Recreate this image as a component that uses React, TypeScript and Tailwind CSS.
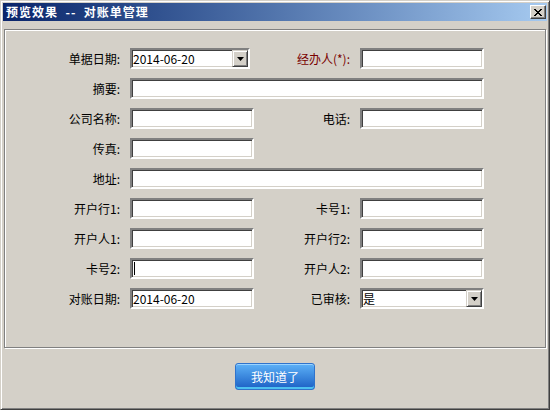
import type { ReactNode } from "react";

const sunken =
  "border-2 border-t-[#808080] border-l-[#808080] border-b-white border-r-white shadow-[inset_1px_1px_0_#404040,inset_-1px_-1px_0_#d4d0c8] bg-white";

function Label({ children, red }: { children: ReactNode; red?: boolean }) {
  return (
    <div
      className={`pr-[10px] text-right leading-[21px] ${
        red ? "text-[#7a0000]" : "text-black"
      }`}
    >
      {children}
    </div>
  );
}

function Field({
  wide,
  children,
}: {
  wide?: boolean;
  children?: ReactNode;
}) {
  return (
    <div
      className={`${sunken} flex h-[21px] items-center pl-[1px] leading-none ${
        wide ? "col-span-3 w-[354px]" : "w-[124px]"
      }`}
    >
      {children}
    </div>
  );
}

function DropButton() {
  return (
    <div className="flex h-[17px] w-[16px] items-center justify-center border border-t-[#d4d0c8] border-l-[#d4d0c8] border-b-[#404040] border-r-[#404040] bg-[#d4d0c8] shadow-[inset_1px_1px_0_#fff,inset_-1px_-1px_0_#808080]">
      <svg width="7" height="4" viewBox="0 0 7 4">
        <path d="M0 0h7L3.5 4z" fill="#000" />
      </svg>
    </div>
  );
}

function Combo({ value, w }: { value: string; w: string }) {
  return (
    <div className={`${sunken} flex h-[21px] items-center justify-between pl-[1px] ${w}`}>
      <span className="leading-none">{value}</span>
      <DropButton />
    </div>
  );
}

function App() {
  return (
    <div
      className="flex h-[410px] w-[550px] flex-col border border-t-[#d4d0c8] border-l-[#d4d0c8] border-b-[#404040] border-r-[#404040] bg-[#d4d0c8] p-[2px] text-[12px] shadow-[inset_1px_1px_0_#fff,inset_-1px_-1px_0_#808080]"
      style={{ fontFamily: '"Noto Sans CJK SC", "Liberation Sans", sans-serif' }}
    >
      <div className="flex h-[18px] items-center justify-between bg-linear-to-r from-[#0a246a] to-[#a6caf0] pl-[3px] pr-[1px]">
        <span className="whitespace-pre font-bold leading-none tracking-[1px] text-white">
          预览效果  --  对账单管理
        </span>
        <div className="flex h-[14px] w-[16px] items-center justify-center border border-t-white border-l-white border-b-[#404040] border-r-[#404040] bg-[#d4d0c8] shadow-[inset_-1px_-1px_0_#808080]">
          <svg width="8" height="7" viewBox="0 0 8 7" shapeRendering="crispEdges">
            <path
              d="M0 0h2v1h-2zM6 0h2v1h-2zM1 1h2v1h-2zM5 1h2v1h-2zM2 2h4v1h-4zM3 3h2v1h-2zM2 4h4v1h-4zM1 5h2v1h-2zM5 5h2v1h-2zM0 6h2v1h-2zM6 6h2v1h-2z"
              fill="#000"
            />
          </svg>
        </div>
      </div>

      <div className="mx-[1px] mt-[8px] h-[319px] border border-[#808080] pt-[18px] shadow-[inset_1px_1px_0_#fff,1px_1px_0_#fff]">
        <div className="grid grid-cols-[125px_124px_106px_124px] gap-y-[9px]">
          <Label>单据日期:</Label>
          <div>
            <Combo value="2014-06-20" w="w-[120px]" />
          </div>
          <Label red>经办人(*):</Label>
          <Field />

          <Label>摘要:</Label>
          <Field wide />

          <Label>公司名称:</Label>
          <Field />
          <Label>电话:</Label>
          <Field />

          <Label>传真:</Label>
          <Field />
          <div className="col-span-2" />

          <Label>地址:</Label>
          <Field wide />

          <Label>开户行1:</Label>
          <Field />
          <Label>卡号1:</Label>
          <Field />

          <Label>开户人1:</Label>
          <Field />
          <Label>开户行2:</Label>
          <Field />

          <Label>卡号2:</Label>
          <Field>
            <span className="ml-[1px] h-[13px] w-px bg-black" />
          </Field>
          <Label>开户人2:</Label>
          <Field />

          <Label>对账日期:</Label>
          <Field>2014-06-20</Field>
          <Label>已审核:</Label>
          <Combo value="是" w="w-[124px]" />
        </div>
      </div>

      <div className="mt-[15px] flex justify-center">
        <button className="h-[27px] w-[80px] rounded-[3px] border border-[#2f73cc] bg-linear-to-b from-[#5db1f7] to-[#1c5fc4] text-[12px] text-white shadow-[inset_0_1px_0_#9ad3ff,inset_0_-2px_0_#4cc0f0]">
          我知道了
        </button>
      </div>
    </div>
  );
}

export default App;
